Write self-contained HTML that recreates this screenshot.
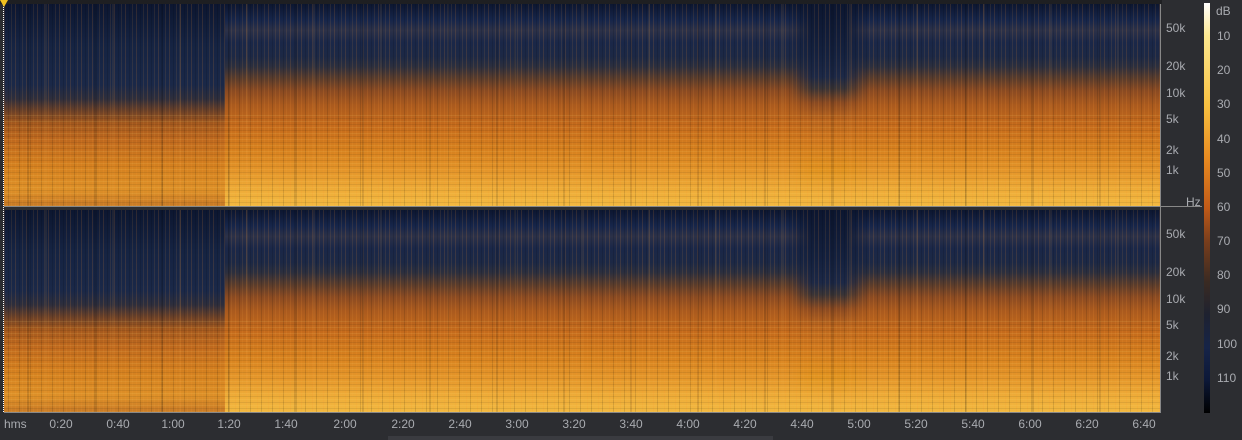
<!DOCTYPE html>
<html><head><meta charset="utf-8"><style>
body{margin:0;width:1242px;height:440px;background:#2c2d31;position:relative;overflow:hidden;font-family:"Liberation Sans",sans-serif;color:#a9abb0;font-size:12px}
.ch{position:absolute;left:4px;width:1156px;height:202px;overflow:hidden;background:#000}
.z{position:absolute;top:0;height:100%}
.main{background:linear-gradient(180deg,#0c1630 0%,#16254a 8%,#2c3148 13%,#1a2748 19%,#1c2845 26%,#2c2f3e 31%,#5a3c2c 37%,#8a4a22 43%,#aa5a1e 50%,#c46a1c 60%,#d6801e 72%,#e4962a 83%,#eeac38 92%,#f2b840 100%)}
.left{background:linear-gradient(180deg,#0c1630 0%,#152342 20%,#1a2848 40%,#2e2e3c 47%,#6a4028 53%,#a2581e 59%,#c06a1e 68%,#d4801f 80%,#dd9028 92%,#c87a26 100%)}
.blu{background:linear-gradient(180deg,#0c1630 0%,#14213f 25%,#1c2846 36%,#3a3436 42%,#8a4a22 49%,#b8641e 57%,#d0781e 68%,#e0921f 82%,#eeac38 93%,#f2b840 100%);-webkit-mask:linear-gradient(90deg,transparent,#000 30%,#000 70%,transparent);mask:linear-gradient(90deg,transparent,#000 30%,#000 70%,transparent)}
.st{position:absolute;inset:0;background:
repeating-linear-gradient(90deg,rgba(255,150,50,.14) 0 1px,transparent 1px 4px,rgba(0,0,0,.12) 4px 5px,transparent 5px 7px,rgba(255,170,70,.1) 7px 8px,transparent 8px 11px),
repeating-linear-gradient(90deg,transparent 0 23px,rgba(0,0,0,.12) 23px 25px,transparent 25px 41px,rgba(255,180,80,.08) 41px 43px,transparent 43px 67px);}
.hn{position:absolute;left:0;right:0;top:55%;bottom:0;background:repeating-linear-gradient(180deg,rgba(255,230,130,.1) 0 1px,transparent 1px 3px,rgba(0,0,0,.08) 3px 4px,transparent 4px 6px)}
.t{position:absolute;top:417px;transform:translateX(-50%)}
.hz{position:absolute;left:1166px}
.db{position:absolute;left:1217px}
</style></head><body>
<div style="position:absolute;left:0;top:0;width:1162px;height:4px;background:#1e1f22"></div>
<div class="ch" style="top:4px">
<div class="z main" style="left:0;width:1156px"></div>
<div class="z left" style="left:0;width:221px"></div>
<div class="z blu" style="left:785px;width:80px"></div>
<div class="st"></div><div class="hn"></div>
</div>
<div class="ch" style="top:210px">
<div class="z main" style="left:0;width:1156px"></div>
<div class="z left" style="left:0;width:221px"></div>
<div class="z blu" style="left:785px;width:80px"></div>
<div class="st"></div><div class="hn"></div>
</div>
<div style="position:absolute;left:4px;top:206px;width:1198px;height:1px;background:#888"></div>
<div style="position:absolute;left:4px;top:412px;width:1156px;height:1px;background:#888"></div>
<div style="position:absolute;left:1160px;top:4px;width:1px;height:409px;background:#888"></div>
<div style="position:absolute;left:3px;top:4px;height:408px;border-left:1px dotted #fff"></div>
<div style="position:absolute;left:0;top:0;width:0;height:0;border-left:4px solid transparent;border-right:4px solid transparent;border-top:7px solid #f0c020"></div>

<div class="hz" style="top:21px">50k</div><div class="hz" style="top:59px">20k</div><div class="hz" style="top:86px">10k</div><div class="hz" style="top:112px">5k</div><div class="hz" style="top:143px">2k</div><div class="hz" style="top:163px">1k</div>
<div class="hz" style="top:195px;left:1186px">Hz</div>
<div class="hz" style="top:227px">50k</div><div class="hz" style="top:265px">20k</div><div class="hz" style="top:292px">10k</div><div class="hz" style="top:318px">5k</div><div class="hz" style="top:349px">2k</div><div class="hz" style="top:369px">1k</div>

<div style="position:absolute;left:1204px;top:3px;width:6px;height:410px;background:linear-gradient(180deg,#fff 0%,#fde890 8%,#f8c040 25%,#e88a20 38%,#c05a18 50%,#7a3e1c 58%,#3a2a22 68%,#1e2230 76%,#162448 84%,#0c1838 92%,#000 100%)"></div>
<div class="db" style="top:4px;left:1216px">dB</div>
<div class="db" style="top:29px">10</div><div class="db" style="top:63px">20</div><div class="db" style="top:97px">30</div><div class="db" style="top:132px">40</div><div class="db" style="top:166px">50</div><div class="db" style="top:200px">60</div><div class="db" style="top:234px">70</div><div class="db" style="top:268px">80</div><div class="db" style="top:302px">90</div><div class="db" style="top:337px">100</div><div class="db" style="top:371px">110</div>

<div style="position:absolute;left:4px;top:417px">hms</div>
<div class="t" style="left:61px">0:20</div><div class="t" style="left:118px">0:40</div><div class="t" style="left:173px">1:00</div><div class="t" style="left:229px">1:20</div><div class="t" style="left:286px">1:40</div><div class="t" style="left:345px">2:00</div><div class="t" style="left:403px">2:20</div><div class="t" style="left:460px">2:40</div><div class="t" style="left:517px">3:00</div><div class="t" style="left:574px">3:20</div><div class="t" style="left:631px">3:40</div><div class="t" style="left:688px">4:00</div><div class="t" style="left:745px">4:20</div><div class="t" style="left:802px">4:40</div><div class="t" style="left:859px">5:00</div><div class="t" style="left:916px">5:20</div><div class="t" style="left:973px">5:40</div><div class="t" style="left:1030px">6:00</div><div class="t" style="left:1087px">6:20</div><div class="t" style="left:1144px">6:40</div>
<div style="position:absolute;left:388px;top:436px;width:385px;height:4px;background:#3a3b40"></div>
</body></html>
